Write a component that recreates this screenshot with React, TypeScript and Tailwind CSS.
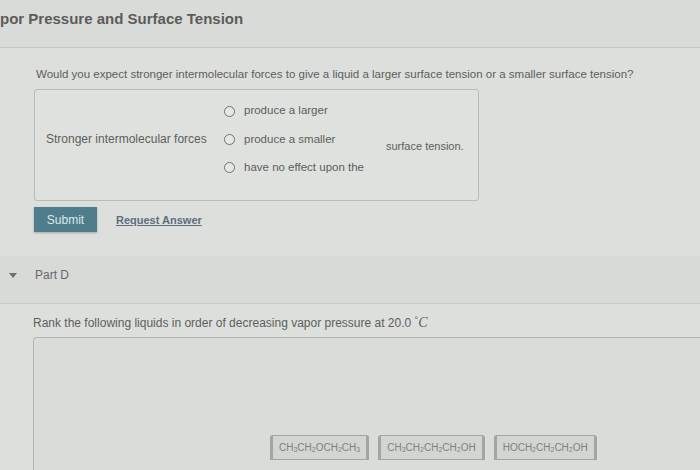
import type { ReactNode } from 'react'

const OPTIONS = ['produce a larger', 'produce a smaller', 'have no effect upon the']

function Radio({ label }: { label: string }) {
  return (
    <label className="flex items-center gap-[9px]">
      <span className="h-[11px] w-[11px] rounded-full border-[1.5px] border-[#6f7370] bg-[#e6e8e5]" />
      <span>{label}</span>
    </label>
  )
}

function Chip({ children }: { children: ReactNode }) {
  return (
    <div className="flex h-[25px] items-center rounded-t-[3px] border border-x-[3px] border-[#a3a5a2] bg-[#d3d5d2] px-[6px] text-[10px] text-[#7f817f]">
      {children}
    </div>
  )
}

const Sub = ({ n }: { n: string }) => <sub className="text-[7px]">{n}</sub>

export default function App() {
  return (
    <div
      className="h-[470px] w-[700px] overflow-hidden bg-[#dddfdc] text-[#5c5e5c]"
      style={{ fontFamily: '"Liberation Sans", Arial, sans-serif' }}
    >
      {/* header */}
      <header className="flex h-[48px] items-start border-b border-[#c6c8c5] bg-[#d9dbd8] pt-[8px]">
        <h1 className="text-[15px] font-bold text-[#5a5c5a]">por Pressure and Surface Tension</h1>
      </header>

      {/* Part C body */}
      <section className="pl-[34px] pt-[18px]">
        <p className="pl-[2px] text-[11.5px]">
          Would you expect stronger intermolecular forces to give a liquid a larger surface tension or a smaller
          surface tension?
        </p>
        <div className="mt-[6px] flex h-[112px] w-[445px] items-center rounded-[3px] border border-[#b9bbb8] bg-[#dfe1de] pl-[11px] text-[11.5px]">
          <span className="mt-[-12px] w-[178px] text-[12px]">Stronger intermolecular forces</span>
          <div className="mt-[-12px] flex w-[162px] flex-col gap-[11px]">
            {OPTIONS.map((o) => (
              <Radio key={o} label={o} />
            ))}
          </div>
          <span className="mt-[2px] text-[11px]">surface tension.</span>
        </div>
        <div className="mt-[6px] flex items-center gap-[19px]">
          <button
            type="button"
            className="h-[25px] w-[63px] bg-[#4e7d8c] text-[12px] text-[#dde7ea] shadow-[0_1px_2px_rgba(0,0,0,0.25)]"
          >
            Submit
          </button>
          <a className="text-[11px] font-bold text-[#5d6d7c] underline">Request Answer</a>
        </div>
      </section>

      {/* Part D */}
      <div className="mt-[24px] flex h-[48px] items-center border-b border-[#c9cbc8] bg-[#d8dad7] pb-[9px]">
        <span className="ml-[9px] h-0 w-0 border-x-[4px] border-t-[5px] border-x-transparent border-t-[#6d706d]" />
        <span className="ml-[18px] text-[12px] text-[#666866]">Part D</span>
      </div>

      <section className="pl-[33px] pt-[8px]">
        <p className="text-[12px]">
          Rank the following liquids in order of decreasing vapor pressure at 20.0{' '}
          <sup className="top-[-0.5em] text-[9px]">°</sup>
          <i className="text-[14px]" style={{ fontFamily: '"Liberation Serif", serif' }}>
            C
          </i>
        </p>
        <div className="mt-[4px] flex h-[140px] items-start rounded-tl-[4px] border-l border-t border-[#b5b7b4] bg-[#dadcd9] pl-[236px] pt-[97px]">
          <div className="flex gap-[9px]">
            <Chip>
              CH<Sub n="3" />CH<Sub n="2" />OCH<Sub n="2" />CH<Sub n="3" />
            </Chip>
            <Chip>
              CH<Sub n="3" />CH<Sub n="2" />CH<Sub n="2" />CH<Sub n="2" />OH
            </Chip>
            <Chip>
              HOCH<Sub n="2" />CH<Sub n="2" />CH<Sub n="2" />OH
            </Chip>
          </div>
        </div>
      </section>
    </div>
  )
}
